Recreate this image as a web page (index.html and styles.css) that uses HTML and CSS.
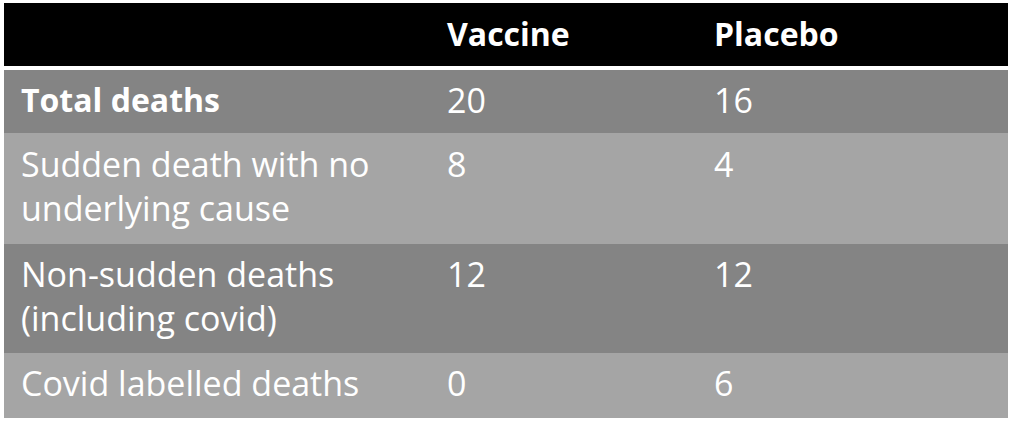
FILE: index.html
```html
<!DOCTYPE html>
<html>
<head>
<meta charset="utf-8">
<link rel="stylesheet" href="styles.css">
</head>
<body>
<table class="grid">
  <colgroup>
    <col class="c1"><col class="c2"><col class="c3">
  </colgroup>
  <thead>
    <tr class="head">
      <th></th><th>Vaccine</th><th>Placebo</th>
    </tr>
  </thead>
  <tbody>
    <tr class="dark r1">
      <td class="bold">Total deaths</td><td>20</td><td>16</td>
    </tr>
    <tr class="light r2">
      <td>Sudden death with no underlying cause</td><td>8</td><td>4</td>
    </tr>
    <tr class="dark r3">
      <td>Non-sudden deaths (including covid)</td><td>12</td><td>12</td>
    </tr>
    <tr class="light r4">
      <td>Covid labelled deaths</td><td>0</td><td>6</td>
    </tr>
  </tbody>
</table>
</body>
</html>
```
FILE: styles.css
```css
html, body {
  margin: 0;
  padding: 0;
  background: #ffffff;
}
body {
  padding: 3px 5px 0 4px;
}
.grid {
  width: 1004px;
  border-collapse: separate;
  border-spacing: 0;
  table-layout: fixed;
  font-family: "Open Sans", Lato, sans-serif;
  font-size: 34px;
  line-height: 44px;
  color: #ffffff;
}
.c1 { width: 426px; }
.c2 { width: 267px; }
.c3 { width: 311px; }
th, td {
  text-align: left;
  vertical-align: top;
  padding: 8px 16px 0 17px;
  box-sizing: border-box;
}
.head th {
  background: #000000;
  font-weight: 700;
  font-size: 32px;
  height: 67px;
  padding-top: 9px;
  border-bottom: 4px solid #ffffff;
}
.dark td { background: #848484; }
.light td { background: #a5a5a5; }
.r1 td { height: 63px; }
.r2 td { height: 111px; padding-top: 9px; }
.r3 td { height: 109px; }
.r4 td { height: 65px; }
.bold { font-weight: 700; font-size: 32px; }
```
